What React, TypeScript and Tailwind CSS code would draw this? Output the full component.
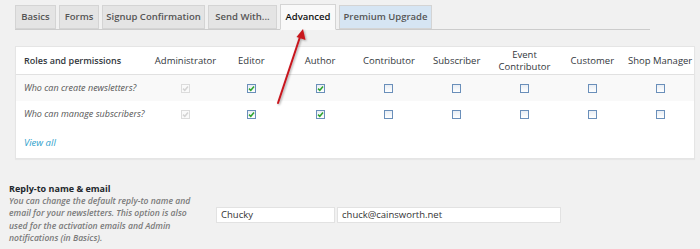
import React from "react";

const Check = ({ disabled = false, checked = false }: { disabled?: boolean; checked?: boolean }) => (
  <span
    className={
      "inline-flex h-[9px] w-[9px] items-center justify-center border " +
      (disabled ? "border-[#dcdcdc] bg-[#fafafa]" : "border-[#6a8fba] bg-gradient-to-b from-[#e9eef4] to-[#ffffff]")
    }
  >
    {checked && (
      <svg width="7" height="7" viewBox="0 0 7 7">
        <path d="M1 3.6 L2.8 5.3 L6 1.6" fill="none" stroke={disabled ? "#d4d4d4" : "#2fa52f"} strokeWidth="1.5" />
      </svg>
    )}
  </span>
);

const cols = ["w-[64px]", "w-[68px]", "w-[70px]", "w-[68px]", "w-[68px]", "w-[68px]", "w-[68px]", "w-[68px]"];

const Row = ({ label, bg }: { label: string; bg: string }) => (
  <div className={"flex h-[26px] items-center " + bg}>
    <div className="w-[138px] pl-[8px] text-[9px] italic text-[#555]">{label}</div>
    <div className={cols[0] + " flex justify-center"}><Check disabled checked /></div>
    <div className={cols[1] + " flex justify-center"}><Check checked /></div>
    <div className={cols[2] + " flex justify-center"}><Check checked /></div>
    <div className={cols[3] + " flex justify-center"}><Check /></div>
    <div className={cols[4] + " flex justify-center"}><Check /></div>
    <div className={cols[5] + " flex justify-center"}><Check /></div>
    <div className={cols[6] + " flex justify-center"}><Check /></div>
    <div className={cols[7] + " flex justify-center"}><Check /></div>
  </div>
);

export default function App() {
  const tabs = [
    { t: "Basics", w: "w-[41px]", c: "bg-[#e4e4e4] text-[#555]" },
    { t: "Forms", w: "w-[40px]", c: "bg-[#e4e4e4] text-[#555]" },
    { t: "Signup Confirmation", w: "w-[103px]", c: "bg-[#e4e4e4] text-[#555]" },
    { t: "Send With...", w: "w-[69px]", c: "bg-[#e4e4e4] text-[#555]" },
    { t: "Advanced", w: "w-[56px]", c: "bg-[#f9f9f9] text-[#111] h-[26px] -mb-px border-b-[#f9f9f9]" },
    { t: "Premium Upgrade", w: "w-[93px]", c: "bg-[#d6e5f3] text-[#555]" },
  ];
  const heads = ["Administrator", "Editor", "Author", "Contributor", "Subscriber", "Event Contributor", "Customer", "Shop Manager"];
  return (
    <div
      className="relative h-[249px] w-[700px] overflow-hidden bg-[#f1f1f1]"
      style={{ fontFamily: '"Open Sans", "DejaVu Sans", sans-serif' }}
    >
      <div className="ml-[15px] mt-[5px] flex h-[25px] w-[635px] items-end gap-[3px] border-b border-[#cccccc]">
        {tabs.map((tab) => (
          <div
            key={tab.t}
            className={
              "flex h-[24px] items-center justify-center border border-[#d4d4d4] text-[9.5px] font-semibold " +
              tab.w +
              " " +
              tab.c
            }
          >
            {tab.t}
          </div>
        ))}
      </div>

      <div className="ml-[15px] mt-[16px] h-[113px] w-[680px] border border-[#e5e5e5] bg-white shadow-[0_1px_1px_rgba(0,0,0,0.04)]">
        <div className="flex h-[28px] items-center border-b border-[#e1e1e1] text-[9.5px] text-[#32373c]">
          <div className="w-[138px] pl-[8px] text-[9px] font-semibold">Roles and permissions</div>
          {heads.map((h, i) => (
            <div key={h} className={cols[i] + " text-center leading-[12px]"}>
              {h === "Event Contributor" ? (
                <>
                  Event
                  <br />
                  Contributor
                </>
              ) : (
                h
              )}
            </div>
          ))}
        </div>
        <Row label="Who can create newsletters?" bg="bg-[#f9f9f9]" />
        <Row label="Who can manage subscribers?" bg="bg-white" />
        <div className="flex h-[32px] items-center pl-[8px] text-[9.5px] italic text-[#2ea2cc]">View all</div>
      </div>

      <div className="mt-[24px] flex">
        <div className="w-[216px] pl-[9px]">
          <div className="text-[9px] font-bold leading-[12px] text-[#23282d]">Reply-to name &amp; email</div>
          <div className="text-[8.6px] font-semibold italic leading-[12.3px] text-[#7a7a7a]">
            You can change the default reply-to name and
            <br />
            email for your newsletters. This option is also
            <br />
            used for the activation emails and Admin
            <br />
            notifications (in Basics).
          </div>
        </div>
        <div className="mt-[24px] flex gap-[2px]">
          <div className="flex h-[16px] w-[119px] items-center border border-[#e2e2e2] bg-white pl-[4px] text-[9.5px] text-[#333]">
            Chucky
          </div>
          <div className="flex h-[16px] w-[224px] items-center border border-[#e2e2e2] bg-white pl-[4px] text-[9.5px] text-[#333]">
            chuck@cainsworth.net
          </div>
        </div>
      </div>

      <svg className="pointer-events-none absolute left-0 top-0" width="700" height="249">
        <defs>
          <filter id="sh" x="-50%" y="-50%" width="200%" height="200%">
            <feDropShadow dx="1" dy="1" stdDeviation="1" floodColor="#000" floodOpacity="0.35" />
          </filter>
        </defs>
        <g filter="url(#sh)">
          <line x1="278" y1="103" x2="300" y2="37" stroke="#c8161d" strokeWidth="2" strokeLinecap="round" />
          <polygon points="303,29 305.5,40 296.5,37" fill="#c8161d" />
        </g>
      </svg>
    </div>
  );
}
